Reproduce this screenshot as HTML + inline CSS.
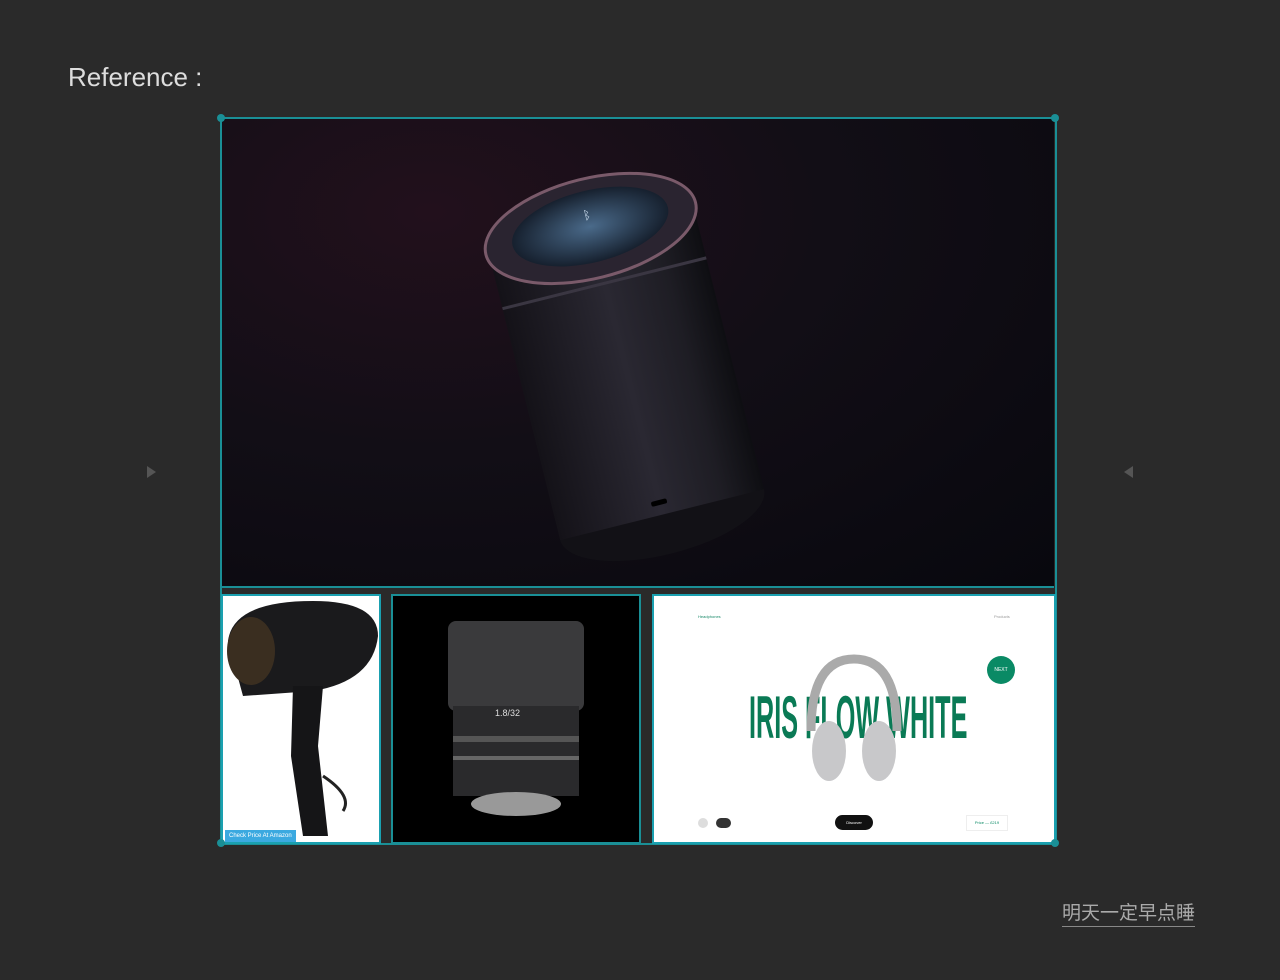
<!DOCTYPE html>
<html><head><meta charset="utf-8"><style>
body{margin:0;width:1280px;height:980px;background:#2a2a2a;position:relative;overflow:hidden;font-family:"Liberation Sans",sans-serif}
.a{position:absolute}
.dot{position:absolute;width:8px;height:8px;border-radius:50%;background:#1a8f96}
</style></head><body>
<div class="a" style="left:68px;top:62px;color:#ddd;font-size:26px">Reference :</div>
<div class="a" style="left:147px;top:466px;width:0;height:0;border-left:9px solid #555;border-top:6px solid transparent;border-bottom:6px solid transparent"></div>
<div class="a" style="left:1124px;top:466px;width:0;height:0;border-right:9px solid #555;border-top:6px solid transparent;border-bottom:6px solid transparent"></div>
<div class="a" style="left:220px;top:117px;width:833px;height:724px;border:2px solid #1a8f96"></div>
<div class="a" style="left:222px;top:119px;width:832px;height:467px;background:radial-gradient(ellipse at 25% 20%,#22101c 0%,#120e16 45%,#08080e 100%)">
<svg width="832" height="467" viewBox="0 0 832 467">
<defs><linearGradient id="g" x1="0" x2="1"><stop offset="0" stop-color="#141218"/><stop offset=".5" stop-color="#2a2832"/><stop offset=".8" stop-color="#1e1d24"/><stop offset="1" stop-color="#0e0e12"/></linearGradient>
<radialGradient id="t"><stop offset="0" stop-color="#4a6a8a"/><stop offset="1" stop-color="#16202e"/></radialGradient></defs>
<g transform="translate(405,255) rotate(-14)">
<ellipse cx="0" cy="145" rx="105" ry="40" fill="#121116"/>
<rect x="-105" y="-150" width="210" height="295" fill="url(#g)"/>
<rect x="-105" y="-95" width="210" height="3" fill="#3a3642"/>
<ellipse cx="0" cy="-150" rx="108" ry="50" fill="#2a2430" stroke="#7a5a6a" stroke-width="3"/>
<ellipse cx="0" cy="-152" rx="80" ry="36" fill="url(#t)"/>
<text x="-4" y="-160" fill="#cde" font-size="12">ᛒ</text>
<rect x="-8" y="130" width="16" height="5" rx="2" fill="#000"/>
</g>
</svg></div>
<div class="a" style="left:222px;top:586px;width:832px;height:2px;background:#1a8f96"></div>
<div class="a" style="left:221px;top:594px;width:156px;height:246px;background:#fff;border:2px solid #1aa0b0;overflow:hidden">
<svg width="156" height="246"><path d="M5 45 Q10 5 90 5 Q155 5 155 40 Q150 85 90 95 L20 100 Z" fill="#1a1a1c"/><ellipse cx="28" cy="55" rx="24" ry="34" fill="#3a2e20"/><path d="M70 90 L100 90 L95 150 L105 240 L80 240 L68 160 Z" fill="#151517"/><path d="M100 180 Q130 200 120 215" fill="none" stroke="#222" stroke-width="3"/></svg>
<div class="a" style="left:2px;bottom:0;background:#3ba9e0;color:#fff;font-size:6px;padding:3px 4px">Check Price At Amazon</div></div>
<div class="a" style="left:391px;top:594px;width:246px;height:246px;background:#000;border:2px solid #1a8f96">
<svg width="246" height="246"><rect x="55" y="25" width="136" height="90" rx="8" fill="#3a3a3c"/><rect x="60" y="110" width="126" height="90" fill="#2a2a2c"/><rect x="60" y="140" width="126" height="6" fill="#555"/><rect x="60" y="160" width="126" height="4" fill="#666"/><ellipse cx="123" cy="208" rx="45" ry="12" fill="#999"/>
<text x="102" y="120" fill="#ddd" font-size="9" font-family="Liberation Sans">1.8/32</text></svg></div>
<div class="a" style="left:652px;top:594px;width:400px;height:246px;background:#fff;border:2px solid #1aa0b0;overflow:hidden">
<div class="a" style="left:44px;top:18px;font-size:4px;color:#1a8a6a">Headphones</div>
<div class="a" style="left:340px;top:18px;font-size:4px;color:#999">Products</div>
<div class="a" style="left:95px;top:92px;font-size:60px;line-height:1;color:#0a7a55;font-weight:bold;transform:scaleX(.42);transform-origin:left;white-space:nowrap;width:520px">IRIS FLOW WHITE</div>
<svg class="a" style="left:145px;top:55px" width="110" height="130"><path d="M12 80 Q12 8 55 8 Q98 8 98 80" fill="none" stroke="#aaa" stroke-width="9"/><ellipse cx="30" cy="100" rx="17" ry="30" fill="#c8c8ca"/><ellipse cx="80" cy="100" rx="17" ry="30" fill="#c8c8ca"/></svg>
<div class="a" style="left:333px;top:60px;width:28px;height:28px;border-radius:50%;background:#0a8a65;color:#fff;font-size:5px;text-align:center;line-height:28px">NEXT</div>
<div class="a" style="left:44px;top:222px;width:10px;height:10px;border-radius:50%;background:#ddd"></div>
<div class="a" style="left:62px;top:222px;width:15px;height:10px;border-radius:5px;background:#333"></div>
<div class="a" style="left:181px;top:219px;width:38px;height:15px;border-radius:8px;background:#111;color:#fff;font-size:4px;text-align:center;line-height:15px">Discover</div>
<div class="a" style="left:312px;top:219px;width:40px;height:14px;border:1px solid #eee;font-size:4px;line-height:14px;color:#0a8a65;text-align:center">Price — £219</div>
</div>
<div class="dot" style="left:217px;top:114px"></div><div class="dot" style="left:1051px;top:114px"></div>
<div class="dot" style="left:217px;top:839px"></div><div class="dot" style="left:1051px;top:839px"></div>
<div class="a" style="left:1062px;top:898px;color:#aaa;font-size:19px;font-family:'Liberation Sans','Noto Sans CJK SC',sans-serif;border-bottom:1px solid #888;padding-bottom:1px">明天一定早点睡</div>
</body></html>
